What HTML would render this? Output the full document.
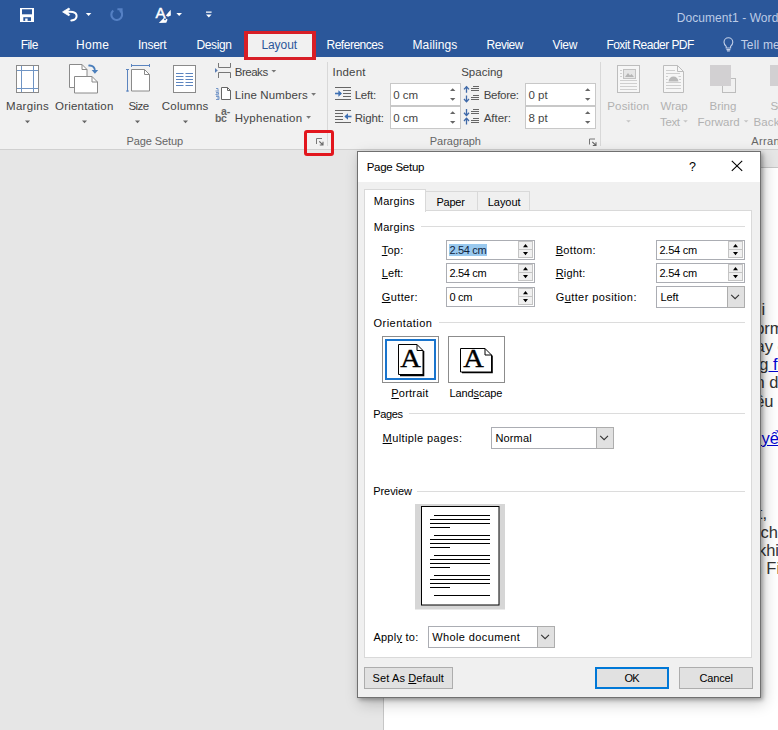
<!DOCTYPE html>
<html><head><meta charset="utf-8"><title>Page Setup</title>
<style>
*{box-sizing:border-box;margin:0;padding:0}
html,body{width:778px;height:730px;overflow:hidden;background:#e6e6e6;font-family:"Liberation Sans","DejaVu Sans",sans-serif;font-size:12px;color:#444}
.a{position:absolute;white-space:nowrap}
svg{position:absolute;overflow:visible}
#title{left:0;top:0;width:778px;height:57px;background:#2b579a}
#ribbon{left:0;top:57px;width:778px;height:93px;background:#f1f1f1;border-bottom:1px solid #d0d0d0}
.sep{width:1px;background:#d8d8d8;top:62px;height:84px}
.inp{background:#fff;border:1px solid #c8c8c8;height:23px;width:71px}
#doc{left:383px;top:167px;width:396px;height:564px;background:#fff;border:1px solid #c6c6c6}
.lnk{color:#0000d0;text-decoration:underline}
#dlg{left:357px;top:151px;width:404px;height:547px;background:#f0f0f0;border:1px solid #707070;box-shadow:2px 2px 4px rgba(0,0,0,.30),3px 5px 14px rgba(0,0,0,.22)}
#dtitle{left:0;top:0;width:402px;height:30px;background:#fff}
.di{background:#fff;border:1px solid #abadb3;height:20px}
.spin{width:15px;border:1px solid #c4c4c4;background:#f0f0f0}
.cb{width:17px;border:1px solid #adadad;background:#e1e1e1}
.hr{height:1px;background:#dcdcdc}
.btn{border:1px solid #adadad;background:#e1e1e1;height:22px}
u{text-decoration:underline}
</style></head><body>
<div class="a" id="title"></div>
<div class="a" style="left:246px;top:33px;width:68px;height:25px;background:#f1f1f1"></div>
<div class="a" id="ribbon"></div>
<div class="a sep" style="left:327px"></div>
<div class="a sep" style="left:600px"></div>
<div class="a inp" style="left:390px;top:83px"></div>
<div class="a inp" style="left:390px;top:106px"></div>
<div class="a inp" style="left:525px;top:83px"></div>
<div class="a inp" style="left:525px;top:106px"></div>
<svg width="778" height="150" style="left:0;top:0" viewBox="0 0 778 150">
 <!-- QAT: save -->
 <rect x="20" y="8" width="14" height="14" fill="#fff"/>
 <rect x="22" y="9.300" width="10" height="5" fill="#2b579a"/>
 <rect x="23.300" y="17.200" width="7.700" height="3.700" fill="#2b579a"/>
 <rect x="25.200" y="18.500" width="2.400" height="2.400" fill="#fff"/>
 <!-- undo -->
 <path d="M66 12 C70 11.400 76.600 11.200 76.600 16 C76.600 18.800 74 20.200 71.300 20.400" fill="none" stroke="#fff" stroke-width="2" stroke-linecap="round"/>
 <path d="M62.600 11.900 L68.900 8 L69.700 9.300 L66.400 11.900 L69.700 14.500 L68.900 15.800 Z" fill="#fff" stroke="#fff" stroke-width="0.800" stroke-linejoin="round"/>
 <path d="M85.800 13.100h5.600l-2.800 3z" fill="#fff"/>
 <!-- redo (dim) -->
 <path d="M119.600 10 A5.400 5.400 0 1 1 113.230 10.460" fill="none" stroke="#5580c4" stroke-width="2.100"/>
 <path d="M117.400 8.200h5.200v4.800h-2v-2.800h-3.200z" fill="#5580c4"/>
 <!-- A with brush -->
 <text x="155.400" y="17.700" font-size="15" fill="#fff" stroke="#fff" stroke-width="0.450" font-family="Liberation Sans, sans-serif">A</text>
 <path d="M170.700 9.800 L170.900 15.600 L168 16.800 L165.800 15.400z" fill="#fff"/>
 <path d="M164.200 17.400 L167.600 19.400 L166.300 22.700 L158.800 22.900z" fill="#fff"/>
 <circle cx="165" cy="19.300" r="0.900" fill="#2b579a"/>
 <path d="M176.400 13.100h5.600l-2.800 3z" fill="#fff"/>
 <!-- customize QAT -->
 <path d="M206 11.4h5.6v1.3H206z M206 14.6h5.6l-2.8 3z" fill="#fff"/>
 <!-- lightbulb -->
 <path d="M726.2 46.4 C724.6 44.8 724 43.6 724 42.2 a4.4 4.4 0 0 1 8.8 0 c0 1.4 -0.6 2.6 -2.2 4.2 v1.6 h-4.4z M726.4 49.6h4 M727 51h2.8" fill="none" stroke="#c3d0e8" stroke-width="1.1"/>

 <!-- Margins icon -->
 <rect x="16.5" y="65.5" width="22" height="27" fill="#fff" stroke="#8a8a8a"/>
 <path d="M21.5 66v26 M33.5 66v26 M17 70.5h21 M17 88.5h21" stroke="#6f94c4" stroke-width="1" fill="none"/>
 <path d="M25 120.6h5l-2.5 2.6z" fill="#666"/>
 <!-- Orientation icon -->
 <path d="M69.5 64.5h12.5l5 5v18h-17.5z" fill="#fff" stroke="#8a8a8a"/>
 <path d="M82 64.5v5h5" fill="none" stroke="#8a8a8a"/>
 <path d="M74.5 76.5h17.5l5.5 5.5v11h-23z" fill="#fff" stroke="#8a8a8a"/>
 <path d="M92 76.500v5.500h5.500" fill="none" stroke="#8a8a8a"/>
 <path d="M88.400 65.600 C92.600 65 95.200 67.400 95 71.400" fill="none" stroke="#4a7ebb" stroke-width="1.8"/>
 <path d="M91.600 70 h6.600 l-3.300 3.800z" fill="#4a7ebb"/>
 <path d="M82 120.600h5l-2.500 2.600z" fill="#666"/>
 <!-- Size icon -->
 <path d="M131.500 69.500h13l5 5v16.500h-18z" fill="#fff" stroke="#8a8a8a"/>
 <path d="M144.500 69.500v5h5" fill="none" stroke="#8a8a8a"/>
 <path d="M131 65.500h19 M131.500 64v3 M149.500 64v3 M127.500 69v22.500 M126 69.500h3 M126 91h3" stroke="#5b84bf" fill="none"/>
 <path d="M135 120.600h5l-2.500 2.600z" fill="#666"/>
 <!-- Columns icon -->
 <rect x="173.500" y="65.500" width="22" height="27" fill="#fff" stroke="#8a8a8a"/>
 <path d="M176 73.500h7.500 M176 76.500h7.500 M176 79.500h7.500 M176 82.500h7.500 M176 85.500h7.500 M185.500 73.500h7.500 M185.500 76.500h7.500 M185.500 79.500h7.500 M185.500 82.500h7.500 M185.500 85.500h7.500" stroke="#5b84bf" fill="none"/>
 <path d="M183 120.600h5l-2.500 2.600z" fill="#666"/>
 <!-- Breaks icon -->
 <path d="M218.500 63v4.500h12v-4.500 M218.500 78v-5.500h12v5.500" fill="none" stroke="#777"/>
 <path d="M215 68l2.800 2.400l-2.800 2.400z" fill="#5b7db1"/>
 <path d="M271.400 70h4.800l-2.400 2.600z" fill="#777"/>
 <!-- Line numbers icon -->
 <path d="M221.500 87.500h6l3 3v9h-9z" fill="#fff" stroke="#666"/>
 <path d="M227.500 87.500v3h3" fill="none" stroke="#666"/>
 <path d="M216 88.500h2v2 M215.500 91h3.500 M216 92.500h2.500v1.500h-2.500v1h3 M216 96.500h3v1.500h-2 M219 98v1.500h-3" fill="none" stroke="#6a8fc4" stroke-width="0.9"/>
 <path d="M311.200 93.100h4.800l-2.400 2.600z" fill="#777"/>
 <path d="M306.200 116.100h4.800l-2.400 2.600z" fill="#777"/>
 <!-- launcher page setup -->
 <path d="M316.500 144v-5.500h5.500" fill="none" stroke="#777"/>
 <path d="M319.300 141.300l3.200 3.200 M323 141.800v3.200h-3.200" fill="none" stroke="#666" stroke-width="1.100"/>
 <!-- indent left icon -->
 <path d="M335 87.500h16 M343 90.500h8 M343 93.500h8 M343 96.500h8 M335 99.500h16" stroke="#666" fill="none"/>
 <path d="M335 93.500h6" stroke="#3d6fb3" stroke-width="1.600" fill="none"/>
 <path d="M338.400 90.200l3.600 3.300l-3.600 3.300z" fill="#3d6fb3"/>
 <!-- indent right icon -->
 <path d="M335 110.500h16 M335 113.500h8 M335 116.500h8 M335 119.500h8 M335 122.500h16" stroke="#666" fill="none"/>
 <path d="M345.500 116.500h6" stroke="#3d6fb3" stroke-width="1.600" fill="none"/>
 <path d="M348 113.200l-3.600 3.300l3.600 3.300z" fill="#3d6fb3"/>
 <!-- spacing before icon -->
 <path d="M473 86.500h6 M471 88.500h8 M471 90.500h8 M473 95.500h6 M471 97.500h8 M471 99.500h8" stroke="#666" fill="none" stroke-width="1"/>
 <path d="M466.500 86.600v6.200 M466.500 95.400v6.200" stroke="#3f69a8" stroke-width="1.300" fill="none"/>
 <path d="M464 89.400l2.500-2.700l2.500 2.700 M464 99l2.500 2.700l2.500-2.700" stroke="#3f69a8" stroke-width="1.300" fill="none"/>
 <!-- spacing after icon -->
 <path d="M473 109.500h6 M471 111.500h8 M471 113.500h8 M473 118.500h6 M471 120.500h8 M471 122.500h8" stroke="#666" fill="none" stroke-width="1"/>
 <path d="M466.500 109v6.400 M466.500 118.200v6.200" stroke="#3f69a8" stroke-width="1.300" fill="none"/>
 <path d="M464 112.800l2.500 2.700l2.500-2.700 M464 121l2.500-2.700l2.500 2.700" stroke="#3f69a8" stroke-width="1.300" fill="none"/>
 <!-- spinners of ribbon inputs -->
 <g fill="#666">
  <path d="M450 91l2.700-2.800l2.700 2.800z M450 98l2.700 2.800l2.700-2.800z"/>
  <path d="M450 114l2.700-2.800l2.700 2.800z M450 121l2.700 2.800l2.700-2.800z"/>
  <path d="M585 91l2.700-2.800l2.700 2.800z M585 98l2.700 2.800l2.700-2.800z"/>
  <path d="M585 114l2.700-2.800l2.700 2.800z M585 121l2.700 2.800l2.700-2.800z"/>
 </g>
 <!-- launcher paragraph -->
 <path d="M589.500 144.500v-5.500h5.500" fill="none" stroke="#777"/>
 <path d="M592.300 141.800l3.200 3.200 M596 142.300v3.200h-3.200" fill="none" stroke="#666" stroke-width="1.100"/>
 <!-- Position icon (disabled) -->
 <rect x="617.500" y="65.500" width="22" height="27" fill="#f6f6f6" stroke="#bdbdbd"/>
 <rect x="623.500" y="69.500" width="12" height="9" fill="#e6e6e6" stroke="#c2c2c2"/>
 <path d="M625 77l3-4l2 2.500l1.500-1.500l2.500 3z" fill="#b5b5b5"/>
 <path d="M620 70.500h2 M620 73.500h2 M620 76.500h2 M620 80.500h17 M620 83.500h17 M620 86.500h17 M620 89.500h17" stroke="#cfcfcf" fill="none"/>
 <path d="M626.200 120.200h4.600l-2.300 2.400z" fill="#c4c4c4"/>
 <!-- Wrap text icon (disabled) -->
 <path d="M663.500 65.500h14l6 6v21h-20z" fill="#f6f6f6" stroke="#bdbdbd"/>
 <path d="M677.500 65.500v6h6" fill="none" stroke="#bdbdbd"/>
 <path d="M666 70.500h9 M666 73.500h14 M666 76.500h2 M678.500 76.500h2.500 M666 79.500h1.500 M679 79.500h2 M666 82.500h15 M666 85.500h15 M666 88.500h15" stroke="#cfcfcf" fill="none"/>
 <path d="M668.600 81.400 a4.900 4.900 0 0 1 9.800 0z" fill="#b9b9b9"/>
 <path d="M683.200 120.200h4.600l-2.300 2.400z" fill="#c4c4c4"/>
 <!-- Bring forward icon (disabled) -->
 <rect x="722.500" y="78.500" width="13" height="14" fill="none" stroke="#bdbdbd"/>
 <rect x="710" y="65" width="21" height="21" fill="#d2d0d2"/>
 <path d="M743.800 120.200h4.600l-2.300 2.400z" fill="#c4c4c4"/>
 <!-- Send backward icon -->
 <rect x="770" y="65" width="10" height="21" fill="#d2d0d2"/>
</svg>
<div class="a" style="left:221px;top:105px;font-size:10.500px;line-height:12px;color:#666;font-weight:bold;letter-spacing:0px">a-</div>
<div class="a" style="left:215px;top:112px;font-size:10.500px;line-height:12px;color:#666;font-weight:bold;letter-spacing:-0.3px">bc</div>

<!-- document page -->
<div class="a" id="doc"></div>
<div class="a" style="left:20.7px;top:38px;font-size:12px;line-height:15px;color:#fff;letter-spacing:-0.56px">File</div>
<div class="a" style="left:76.0px;top:38px;font-size:12px;line-height:15px;color:#fff;letter-spacing:0.32px">Home</div>
<div class="a" style="left:138.0px;top:38px;font-size:12px;line-height:15px;color:#fff;letter-spacing:-0.27px">Insert</div>
<div class="a" style="left:196.5px;top:38px;font-size:12px;line-height:15px;color:#fff;letter-spacing:-0.38px">Design</div>
<div class="a" style="left:261.4px;top:38px;font-size:12px;line-height:15px;color:#2b579a;letter-spacing:-0.07px">Layout</div>
<div class="a" style="left:326.5px;top:38px;font-size:12px;line-height:15px;color:#fff;letter-spacing:-0.49px">References</div>
<div class="a" style="left:412.5px;top:38px;font-size:12px;line-height:15px;color:#fff;letter-spacing:0.12px">Mailings</div>
<div class="a" style="left:486.5px;top:38px;font-size:12px;line-height:15px;color:#fff;letter-spacing:-0.48px">Review</div>
<div class="a" style="left:552.5px;top:38px;font-size:12px;line-height:15px;color:#fff;letter-spacing:-0.32px">View</div>
<div class="a" style="left:606.4px;top:38px;font-size:12px;line-height:15px;color:#fff;letter-spacing:-0.54px">Foxit Reader PDF</div>
<div class="a" style="left:740.7px;top:38px;font-size:12px;line-height:15px;color:#c3d0e8;letter-spacing:0.18px">Tell me</div>
<div class="a" style="left:676.7px;top:11px;font-size:12px;line-height:15px;color:#bccbe6;letter-spacing:0.08px">Document1 - Word</div>
<div class="a" style="left:6.0px;top:99px;font-size:11.5px;line-height:14px;color:#444;letter-spacing:0.30px">Margins</div>
<div class="a" style="left:55.1px;top:99px;font-size:11.5px;line-height:14px;color:#444;letter-spacing:0.20px">Orientation</div>
<div class="a" style="left:128.4px;top:99px;font-size:11.5px;line-height:14px;color:#444;letter-spacing:-0.57px">Size</div>
<div class="a" style="left:161.8px;top:99px;font-size:11.5px;line-height:14px;color:#444;letter-spacing:0.20px">Columns</div>
<div class="a" style="left:234.7px;top:65px;font-size:11.5px;line-height:14px;color:#444;letter-spacing:-0.47px">Breaks</div>
<div class="a" style="left:234.7px;top:88px;font-size:11.5px;line-height:14px;color:#444;letter-spacing:0.13px">Line Numbers</div>
<div class="a" style="left:234.7px;top:111px;font-size:11.5px;line-height:14px;color:#444;letter-spacing:0.28px">Hyphenation</div>
<div class="a" style="left:126.4px;top:134px;font-size:11px;line-height:14px;color:#666;letter-spacing:-0.09px">Page Setup</div>
<div class="a" style="left:332.5px;top:65px;font-size:11.5px;line-height:14px;color:#444;letter-spacing:0.19px">Indent</div>
<div class="a" style="left:461.2px;top:65px;font-size:11.5px;line-height:14px;color:#444">Spacing</div>
<div class="a" style="left:354.7px;top:88px;font-size:11.5px;line-height:14px;color:#444;letter-spacing:-0.22px">Left:</div>
<div class="a" style="left:354.7px;top:111px;font-size:11.5px;line-height:14px;color:#444;letter-spacing:-0.16px">Right:</div>
<div class="a" style="left:483.7px;top:88px;font-size:11.5px;line-height:14px;color:#444;letter-spacing:-0.30px">Before:</div>
<div class="a" style="left:483.7px;top:111px;font-size:11.5px;line-height:14px;color:#444;letter-spacing:-0.03px">After:</div>
<div class="a" style="left:393.2px;top:88px;font-size:11.5px;line-height:14px;color:#444;letter-spacing:0.02px">0 cm</div>
<div class="a" style="left:393.2px;top:111px;font-size:11.5px;line-height:14px;color:#444;letter-spacing:0.02px">0 cm</div>
<div class="a" style="left:528.5px;top:88px;font-size:11.5px;line-height:14px;color:#444">0 pt</div>
<div class="a" style="left:528.5px;top:111px;font-size:11.5px;line-height:14px;color:#444">8 pt</div>
<div class="a" style="left:429.8px;top:134px;font-size:11px;line-height:14px;color:#666;letter-spacing:-0.03px">Paragraph</div>
<div class="a" style="left:607.3px;top:99px;font-size:11.5px;line-height:14px;color:#b1b1b1;letter-spacing:0.15px">Position</div>
<div class="a" style="left:660.5px;top:99px;font-size:11.5px;line-height:14px;color:#b1b1b1">Wrap</div>
<div class="a" style="left:660.0px;top:115px;font-size:11.5px;line-height:14px;color:#b1b1b1;letter-spacing:-0.35px">Text</div>
<div class="a" style="left:709.5px;top:99px;font-size:11.5px;line-height:14px;color:#b1b1b1">Bring</div>
<div class="a" style="left:697.5px;top:115px;font-size:11.5px;line-height:14px;color:#b1b1b1;letter-spacing:-0.01px">Forward</div>
<div class="a" style="left:770.4px;top:99px;font-size:11.5px;line-height:14px;color:#b1b1b1;letter-spacing:-0.74px">Se</div>
<div class="a" style="left:753.5px;top:115px;font-size:11.5px;line-height:14px;color:#b1b1b1;letter-spacing:0.11px">Back</div>
<div class="a" style="left:751.2px;top:134px;font-size:11px;line-height:14px;color:#666;letter-spacing:0.38px">Arran</div>
<div class="a" style="left:761.6px;top:299px;font-size:16.5px;line-height:21px;color:#333">i</div>
<div class="a" style="left:755.2px;top:318px;font-size:16.5px;line-height:21px;color:#333">orm</div>
<div class="a" style="left:755.6px;top:336px;font-size:16.5px;line-height:21px;color:#333">ay c</div>
<div class="a" style="left:759.3px;top:354px;font-size:16.5px;line-height:21px;color:#333">g<span class="lnk">&nbsp;fo</span></div>
<div class="a" style="left:755.6px;top:372px;font-size:16.5px;line-height:21px;color:#333">n d</div>
<div class="a" style="left:755.2px;top:391px;font-size:16.5px;line-height:21px;color:#333">ều</div>
<div class="a" style="left:752.3px;top:428px;font-size:16.5px;line-height:21px;color:#333"><span class="lnk">uyể</span></div>
<div class="a" style="left:757.8px;top:503px;font-size:16.5px;line-height:21px;color:#333">t,</div>
<div class="a" style="left:760.5px;top:522px;font-size:16.5px;line-height:21px;color:#333">ch</div>
<div class="a" style="left:757.9px;top:540px;font-size:16.5px;line-height:21px;color:#333">khi</div>
<div class="a" style="left:752.6px;top:558px;font-size:16.5px;line-height:21px;color:#333">n Fi</div>
<!-- red highlight boxes -->
<div class="a" style="left:244px;top:31px;width:72px;height:29px;border:3px solid #d81f27;border-left-width:4px;border-right-width:4px"></div>
<div class="a" style="left:304px;top:130px;width:30px;height:26px;border:3px solid #e2161d;border-radius:3px"></div>

<!-- dialog -->
<div class="a" id="dlg">
 <div class="a" id="dtitle"></div>
 <!-- tab panel -->
 <div class="a" style="left:6px;top:58px;width:388px;height:448px;background:#fff;border:1px solid #d9d9d9"></div>
 <div class="a" style="left:67px;top:39px;width:53px;height:20px;border:1px solid #d9d9d9;border-bottom:none"></div>
 <div class="a" style="left:119px;top:39px;width:53px;height:20px;border:1px solid #d9d9d9;border-bottom:none"></div>
 <div class="a" style="left:6px;top:37px;width:62px;height:23px;background:#fff;border:1px solid #d9d9d9;border-bottom:none"></div>
 <!-- group lines -->
 <div class="a hr" style="left:63px;top:74px;width:324px"></div>
 <div class="a hr" style="left:81px;top:170px;width:306px"></div>
 <div class="a hr" style="left:51px;top:261px;width:336px"></div>
 <div class="a hr" style="left:59px;top:339px;width:328px"></div>
 <!-- inputs -->
 <div class="a di" style="left:88px;top:88px;width:89px"></div>
 <div class="a di" style="left:88px;top:111px;width:89px"></div>
 <div class="a di" style="left:88px;top:135px;width:89px"></div>
 <div class="a di" style="left:298px;top:88px;width:89px"></div>
 <div class="a di" style="left:298px;top:111px;width:89px"></div>
 <div class="a di" style="left:298px;top:134px;width:89px;height:22px"></div>
 <div class="a di" style="left:133px;top:275px;width:123px;height:22px"></div>
 <div class="a di" style="left:70px;top:474px;width:127px;height:22px"></div>
 <div class="a cb" style="left:369px;top:134px;height:22px;width:18px"></div>
 <div class="a cb" style="left:238px;top:275px;height:22px;width:18px"></div>
 <div class="a cb" style="left:179px;top:474px;height:22px;width:18px"></div>
 <div class="a spin" style="left:160px;top:89px;height:9px"></div><div class="a spin" style="left:160px;top:97px;height:9px"></div>
 <div class="a spin" style="left:160px;top:112px;height:9px"></div><div class="a spin" style="left:160px;top:120px;height:9px"></div>
 <div class="a spin" style="left:160px;top:136px;height:9px"></div><div class="a spin" style="left:160px;top:144px;height:9px"></div>
 <div class="a spin" style="left:370px;top:89px;height:9px"></div><div class="a spin" style="left:370px;top:97px;height:9px"></div>
 <div class="a spin" style="left:370px;top:112px;height:9px"></div><div class="a spin" style="left:370px;top:120px;height:9px"></div>
 <div class="a" style="left:91px;top:91.500px;width:38px;height:12.500px;background:#99c9ef"></div>
  <svg width="402" height="545" style="left:0;top:0" viewBox="0 0 402 545">
  <!-- close X -->
  <path d="M373.800 8.800l10.400 10 M384.200 8.800l-10.400 10" stroke="#000" stroke-width="1.100" fill="none"/>
  <!-- spinner arrows -->
  <g fill="#000">
   <path d="M165 95.200l2.500-3.200l2.500 3.200z M165 100l2.500 3.200l2.500-3.200z"/>
   <path d="M165 118.200l2.500-3.200l2.500 3.200z M165 123l2.500 3.200l2.500-3.200z"/>
   <path d="M165 142.200l2.500-3.200l2.500 3.200z M165 147l2.500 3.200l2.500-3.200z"/>
   <path d="M375 95.200l2.500-3.200l2.500 3.200z M375 100l2.500 3.200l2.500-3.200z"/>
   <path d="M375 118.200l2.500-3.200l2.500 3.200z M375 123l2.500 3.200l2.500-3.200z"/>
  </g>
  <!-- combobox chevrons -->
  <g fill="none" stroke="#333" stroke-width="1.100">
   <path d="M373.200 142.800l3.900 3.900l3.900-3.900"/>
   <path d="M242.200 283.800l3.900 3.900l3.900-3.900"/>
   <path d="M183.200 482.800l3.900 3.900l3.900-3.900"/>
  </g>
  <!-- orientation: portrait -->
  <rect x="24.500" y="184.500" width="56" height="46" fill="#fff" stroke="#8c8c8c"/>
  <rect x="28" y="188" width="49" height="39" fill="#fbfdff" stroke="#1874cd" stroke-width="2"/>
  <path d="M42 223.500h23.500v-24.500" fill="none" stroke="#000" stroke-width="1.600"/>
  <path d="M40.500 192.500h18.500l6 6v24h-24.500z" fill="#fff" stroke="#000"/>
  <path d="M59 192.500v6h6" fill="none" stroke="#000"/>
  <text x="42.200" y="214.800" font-family="Liberation Serif, serif" font-size="25" fill="#000" stroke="#000" stroke-width="0.350" textLength="20.600" lengthAdjust="spacingAndGlyphs">A</text>
  <!-- orientation: landscape -->
  <rect x="90.500" y="184.500" width="56" height="46" fill="#fff" stroke="#8c8c8c"/>
  <path d="M104 220.500h30v-17" fill="none" stroke="#000" stroke-width="1.600"/>
  <path d="M102.500 196.500h24.500l6.500 6.500v17h-31z" fill="#fff" stroke="#000"/>
  <path d="M127 196.500v6.500h6.500" fill="none" stroke="#000"/>
  <text x="105.200" y="214.800" font-family="Liberation Serif, serif" font-size="25" fill="#000" stroke="#000" stroke-width="0.350" textLength="20.600" lengthAdjust="spacingAndGlyphs">A</text>
  <!-- preview -->
  <rect x="57" y="352" width="90" height="105.500" fill="#d6d6d6"/>
  <rect x="63.500" y="354.500" width="77.500" height="98.500" fill="#fff" stroke="#000"/>
  <g stroke="#000" stroke-width="1" fill="none">
   <path d="M76 363.500h56 M72 367.500h60 M72 371.500h60 M72 375.500h20"/>
   <path d="M76 383.500h56 M72 387.500h60 M72 391.500h60 M72 395.500h20"/>
   <path d="M76 403.500h56 M72 407.500h60 M72 411.500h60 M72 415.500h20"/>
   <path d="M76 423.500h56 M72 427.500h60 M72 431.500h60 M72 435.500h20"/>
   <path d="M76 443.500h56"/>
  </g>
 </svg>

 <!-- buttons -->
 <div class="a btn" style="left:6px;top:515px;width:89px"></div>
 <div class="a btn" style="left:237px;top:515px;width:74px;border:2px solid #0078d7"></div>
 <div class="a btn" style="left:321px;top:515px;width:74px"></div>
<div class="a" style="left:8.7px;top:8px;font-size:11.5px;line-height:14px;color:#000;letter-spacing:-0.26px">Page Setup</div>
<div class="a" style="left:331.1px;top:7px;font-size:12.5px;line-height:16px;color:#000">?</div>
<div class="a" style="left:15.8px;top:42px;font-size:11px;line-height:14px;color:#000;letter-spacing:0.27px">Margins</div>
<div class="a" style="left:78.4px;top:43px;font-size:11px;line-height:14px;color:#000;letter-spacing:-0.21px">Paper</div>
<div class="a" style="left:129.7px;top:43px;font-size:11px;line-height:14px;color:#000;letter-spacing:-0.02px">Layout</div>
<div class="a" style="left:15.8px;top:68px;font-size:11px;line-height:14px;color:#000;letter-spacing:0.27px">Margins</div>
<div class="a" style="left:23.8px;top:91px;font-size:11px;line-height:14px;color:#000;letter-spacing:0.20px"><u>T</u>op:</div>
<div class="a" style="left:23.8px;top:114px;font-size:11px;line-height:14px;color:#000;letter-spacing:0.04px"><u>L</u>eft:</div>
<div class="a" style="left:23.8px;top:138px;font-size:11px;line-height:14px;color:#000;letter-spacing:0.37px"><u>G</u>utter:</div>
<div class="a" style="left:197.7px;top:91px;font-size:11px;line-height:14px;color:#000;letter-spacing:0.33px"><u>B</u>ottom:</div>
<div class="a" style="left:197.7px;top:114px;font-size:11px;line-height:14px;color:#000;letter-spacing:0.16px"><u>R</u>ight:</div>
<div class="a" style="left:197.7px;top:138px;font-size:11px;line-height:14px;color:#000;letter-spacing:0.41px">G<u>u</u>tter position:</div>
<div class="a" style="left:91.6px;top:91px;font-size:11px;line-height:14px;color:#10243e;letter-spacing:-0.35px">2.54 cm</div>
<div class="a" style="left:91.6px;top:114px;font-size:11px;line-height:14px;color:#000;letter-spacing:-0.35px">2.54 cm</div>
<div class="a" style="left:91.6px;top:138px;font-size:11px;line-height:14px;color:#000;letter-spacing:-0.36px">0 cm</div>
<div class="a" style="left:301.5px;top:91px;font-size:11px;line-height:14px;color:#000;letter-spacing:-0.25px">2.54 cm</div>
<div class="a" style="left:301.5px;top:114px;font-size:11px;line-height:14px;color:#000;letter-spacing:-0.25px">2.54 cm</div>
<div class="a" style="left:302.4px;top:138px;font-size:11px;line-height:14px;color:#000;letter-spacing:-0.06px">Left</div>
<div class="a" style="left:15.6px;top:164px;font-size:11px;line-height:14px;color:#000;letter-spacing:0.45px">Orientation</div>
<div class="a" style="left:33.3px;top:234px;font-size:11px;line-height:14px;color:#000;letter-spacing:0.22px"><u>P</u>ortrait</div>
<div class="a" style="left:91.5px;top:234px;font-size:11px;line-height:14px;color:#000;letter-spacing:-0.12px">Land<u>s</u>cape</div>
<div class="a" style="left:15.2px;top:255px;font-size:11px;line-height:14px;color:#000;letter-spacing:-0.34px">Pages</div>
<div class="a" style="left:24.6px;top:279px;font-size:11px;line-height:14px;color:#000;letter-spacing:0.39px"><u>M</u>ultiple pages:</div>
<div class="a" style="left:137.4px;top:279px;font-size:11px;line-height:14px;color:#000;letter-spacing:0.16px">Normal</div>
<div class="a" style="left:15.2px;top:332px;font-size:11px;line-height:14px;color:#000;letter-spacing:-0.05px">Preview</div>
<div class="a" style="left:15.4px;top:478px;font-size:11px;line-height:14px;color:#000;letter-spacing:0.26px">Appl<u>y</u> to:</div>
<div class="a" style="left:74.2px;top:478px;font-size:11px;line-height:14px;color:#000;letter-spacing:0.40px">Whole document</div>
<div class="a" style="left:14.5px;top:519px;font-size:11px;line-height:14px;color:#000;letter-spacing:0.13px">Set As <u>D</u>efault</div>
<div class="a" style="left:266.6px;top:519px;font-size:11px;line-height:14px;color:#000;letter-spacing:-0.80px">OK</div>
<div class="a" style="left:341.4px;top:519px;font-size:11px;line-height:14px;color:#000;letter-spacing:-0.14px">Cancel</div>
</div>
</body></html>
